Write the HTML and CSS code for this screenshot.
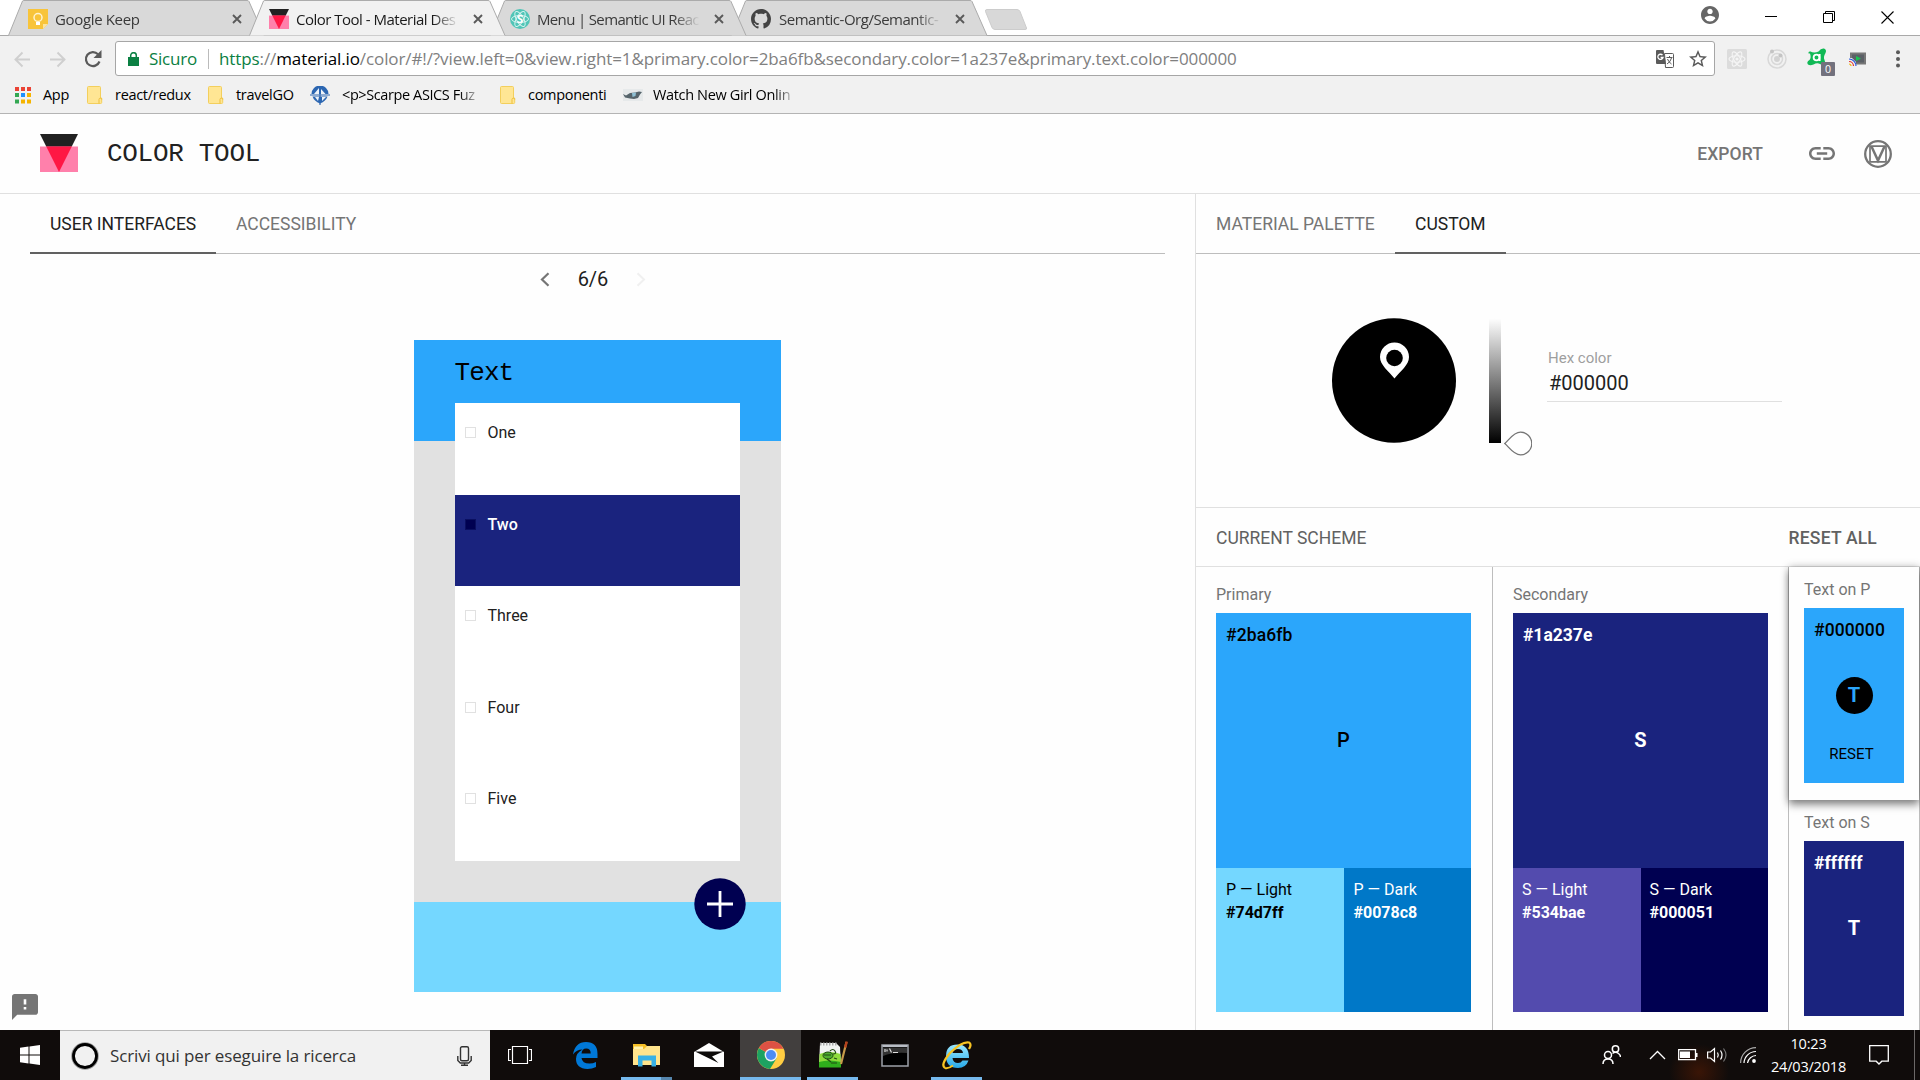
FILE: index.html
```html
<!DOCTYPE html>
<html lang="it">
<head>
<meta charset="utf-8">
<title>Color Tool - Material Design</title>
<link rel="stylesheet" href="styles.css">
</head>
<body>
<svg class="defs" width="0" height="0">
  <defs>
    <symbol id="folder" viewBox="0 0 16 18"><path d="M.5 1.5a1 1 0 0 1 1-1h11a1 1 0 0 1 1 1V12h1.2v4.5a1 1 0 0 1-1 1H1.500a1 1 0 0 1-1-1z" fill="#ffe694" stroke="#f3cf5c"/><path d="M12 17.500v-4a1.300 1.300 0 0 1 2.700 0" fill="none" stroke="#eebf3c"/></symbol>
    <symbol id="close" viewBox="0 0 10 10"><path d="M1 1l8 8M9 1l-8 8" stroke="#5a5a5a" stroke-width="1.900"/></symbol>
    <symbol id="logo" viewBox="0 0 38 38"><path d="M0 0h38L19 38z" fill="#212121"/><path d="M0 12.500h38V38H0z" fill="#ff80ab"/><path d="M6.250 12.500h25.500L19 38z" fill="#ff1744"/></symbol>
    <linearGradient id="ie" x1="0" y1="0" x2="0" y2="1"><stop offset="0" stop-color="#9be8ff"/><stop offset="1" stop-color="#27a9e8"/></linearGradient>
  </defs>
</svg>

<header class="browser">
  <div class="tabstrip">
    <div class="tab t1">
      <svg class="shape" viewBox="0 0 257 36"><path d="M.5 35.500L14.500 1Q15 .5 16 .5H239Q240.500.5 241 1.500L256 35.500"/></svg>
      <svg class="fav" viewBox="0 0 20 20"><path d="M0 0h20v15l-5 5H0z" fill="#f8c43a"/><path d="M20 15l-5 5v-5z" fill="#fbe3a0"/><circle cx="10" cy="8.500" r="4" fill="none" stroke="#fff3d0" stroke-width="1.500"/><path d="M8 13h4v3H8z" fill="#fff"/></svg>
      <span class="title">Google Keep</span>
      <svg class="x"><use href="#close"/></svg>
    </div>
    <div class="tab t2 active">
      <svg class="shape" viewBox="0 0 257 36"><path d="M.5 35.500L14.500 1Q15 .5 16 .5H239Q240.500.5 241 1.500L256 35.500"/></svg>
      <svg class="fav"><use href="#logo"/></svg>
      <span class="title">Color Tool - Material Des</span>
      <svg class="x"><use href="#close"/></svg>
    </div>
    <div class="tab t3">
      <svg class="shape" viewBox="0 0 257 36"><path d="M.5 35.500L14.500 1Q15 .5 16 .5H239Q240.500.5 241 1.500L256 35.500"/></svg>
      <svg class="fav" viewBox="0 0 20 20"><circle cx="10" cy="10" r="10" fill="#50c5b7"/><g fill="none" stroke="#d5f3ef"><ellipse cx="10" cy="10" rx="8.500" ry="3.500"/><ellipse cx="10" cy="10" rx="8.500" ry="3.500" transform="rotate(60 10 10)"/><ellipse cx="10" cy="10" rx="8.500" ry="3.500" transform="rotate(120 10 10)"/></g><text x="10" y="14" text-anchor="middle" font-size="11" font-weight="700" fill="#fff">S</text></svg>
      <span class="title">Menu | Semantic UI Reac</span>
      <svg class="x"><use href="#close"/></svg>
    </div>
    <div class="tab t4">
      <svg class="shape" viewBox="0 0 257 36"><path d="M.5 35.500L14.500 1Q15 .5 16 .5H239Q240.500.5 241 1.500L256 35.500"/></svg>
      <svg class="fav" viewBox="0 0 16 16"><path fill="#444" d="M8 0C3.580 0 0 3.580 0 8c0 3.540 2.290 6.530 5.470 7.590.4.070.55-.17.55-.38 0-.19-.01-.82-.01-1.490-2.010.37-2.530-.49-2.690-.94-.09-.23-.48-.94-.82-1.130-.28-.15-.68-.52-.01-.53.63-.01 1.080.58 1.230.82.72 1.210 1.870.87 2.330.66.070-.52.28-.87.51-1.070-1.780-.2-3.640-.89-3.640-3.950 0-.87.31-1.590.82-2.150-.08-.2-.36-1.020.08-2.120 0 0 .67-.21 2.200.82.64-.18 1.320-.27 2-.27s1.360.09 2 .27c1.530-1.040 2.200-.82 2.200-.82.44 1.100.16 1.920.08 2.120.51.56.82 1.270.82 2.150 0 3.070-1.870 3.750-3.650 3.950.29.25.54.73.54 1.480 0 1.070-.01 1.930-.01 2.200 0 .21.15.46.55.38A8.010 8.010 0 0 0 16 8c0-4.420-3.580-8-8-8z"/></svg>
      <span class="title">Semantic-Org/Semantic-</span>
      <svg class="x"><use href="#close"/></svg>
    </div>
    <svg class="newtab" width="44" height="22" viewBox="0 0 44 22"><path d="M3 .5H33q2 0 3 2l6.500 16.500q.5 1.500-1.500 1.500H11q-2 0-3-2L1.500 2.500Q1 .5 3 .5z" fill="#d8d8d8" stroke="#ccc"/></svg>
    <div class="winctl">
      <svg width="18" height="18" viewBox="2 2 20 20"><path fill="#666" d="M12 2C6.480 2 2 6.480 2 12s4.480 10 10 10 10-4.480 10-10S17.520 2 12 2zm0 3c1.660 0 3 1.340 3 3s-1.340 3-3 3-3-1.340-3-3 1.340-3 3-3zm0 14.200a7.200 7.200 0 0 1-6-3.220c.030-1.990 4-3.080 6-3.080s5.970 1.090 6 3.080a7.200 7.200 0 0 1-6 3.220z"/></svg>
      <svg width="12" height="12"><path d="M0 5.500h12" stroke="#000"/></svg>
      <svg width="12" height="12"><path d="M.5 2.500h9v9h-9zM2.500 2.500v-2h9v9h-2" fill="none" stroke="#000"/></svg>
      <svg width="13" height="13"><path d="M.5.5l12 12M12.500.5l-12 12" stroke="#000" stroke-width="1.100"/></svg>
    </div>
  </div>

  <div class="toolbar">
    <svg class="nav" width="17" height="17" viewBox="0 0 17 17"><path d="M16 8.500H2M8.500 1.500l-7 7 7 7" fill="none" stroke="#cfcfcf" stroke-width="1.900"/></svg>
    <svg class="nav" width="17" height="17" viewBox="0 0 17 17"><path d="M1 8.500h14M8.500 1.500l7 7-7 7" fill="none" stroke="#cfcfcf" stroke-width="1.900"/></svg>
    <svg class="nav" width="18" height="18" viewBox="0 0 18 18"><path d="M15.500 11.500A7 7 0 1 1 14 4.200" fill="none" stroke="#5a5a5a" stroke-width="2.200"/><path d="M17.500 0v8h-8z" fill="#5a5a5a"/></svg>
    <div class="omnibox">
      <svg class="lock" width="11" height="14" viewBox="0 0 11 14"><path d="M0 5h11v9H0z" fill="#0b8043"/><path d="M2.700 6V3.500a2.800 2.800 0 0 1 5.600 0V6" fill="none" stroke="#0b8043" stroke-width="1.500"/></svg>
      <span class="secure">Sicuro</span>
      <span class="sep"></span>
      <span class="url"><i class="g">https</i>://<i class="k">material.io</i>/color/#!/?view.left=0&amp;view.right=1&amp;primary.color=2ba6fb&amp;secondary.color=1a237e&amp;primary.text.color=000000</span>
      <svg class="translate" width="18" height="18" viewBox="0 0 18 18"><path d="M8.500 3.500h8a1 1 0 0 1 1 1v12a1 1 0 0 1-1 1H9.500z" fill="#fff" stroke="#5a5a5a"/><path d="M1 0h6.500L10 14H1a1 1 0 0 1-1-1V1a1 1 0 0 1 1-1z" fill="#5a5a5a"/><path d="M6.500 5.200A2.600 2.600 0 1 0 7 7.500H4.600" fill="none" stroke="#fff" stroke-width="1.300"/><path d="M10.500 7.500h6M13.500 6v1.500M15.500 8q-1 4-4.500 6M11.500 9q1 3 4 5" fill="none" stroke="#5a5a5a"/></svg>
      <svg width="18" height="18" viewBox="2 2 20 20"><path fill="#5a5a5a" d="M22 9.240l-7.190-.62L12 2 9.190 8.630 2 9.240l5.460 4.730L5.820 21 12 17.270 18.180 21l-1.630-7.030L22 9.240zM12 15.400l-3.760 2.270 1-4.280-3.320-2.880 4.380-.38L12 6.100l1.710 4.040 4.380.38-3.320 2.880 1 4.280L12 15.400z"/></svg>
    </div>
    <div class="exts">
      <svg width="20" height="20" viewBox="0 0 20 20"><rect width="20" height="20" rx="1.500" fill="#dcdcdc"/><g fill="none" stroke="#f5f5f5" stroke-width="1.100"><ellipse cx="10" cy="10" rx="8" ry="3.200"/><ellipse cx="10" cy="10" rx="8" ry="3.200" transform="rotate(60 10 10)"/><ellipse cx="10" cy="10" rx="8" ry="3.200" transform="rotate(120 10 10)"/></g><circle cx="10" cy="10" r="1.600" fill="#f5f5f5"/></svg>
      <svg width="20" height="20" viewBox="0 0 20 20"><g fill="none" stroke="#d8d8d8"><circle cx="10" cy="10" r="9" stroke-width="1.500"/><circle cx="10" cy="10" r="5.500" stroke-width="1.500"/></g><circle cx="10" cy="10" r="3" fill="#d2d2d2"/><circle cx="5" cy="2.500" r="2" fill="#c4c4c4"/><circle cx="13.500" cy="6.500" r="2" fill="#c4c4c4"/></svg>
      <svg width="29" height="28" viewBox="0 0 29 28"><path d="M2.500 5.500Q2 3 4.500 3.500q3.500 2 8 0Q15 0 18 .5q3 1 1.500 4.500-2.500 4-1 7 1.500 4-.5 5-2 .5-4-1-3-1.500-6.500.5-3.500 1.500-5.500 0-2-2.500 1.500-4.500 2-2.500.5-6.500z" fill="#10b955"/><circle cx="10.500" cy="9.500" r="2.900" fill="none" stroke="#fff" stroke-width="1.800"/><path d="M13.700 6v7" stroke="#fff" stroke-width="1.800"/><rect x="15" y="14" width="14" height="14" rx="1" fill="#72717d"/><text x="22" y="25" text-anchor="middle" font-size="10.500" fill="#fff">0</text></svg>
      <svg width="17" height="14" viewBox="0 0 17 14"><path d="M2 1.500h14v10H2z" fill="#5b6066" stroke="#777" stroke-width="2"/><path d="M7 4l5 2.500L7 9z" fill="#18c653"/><path d="M0 6h3l4 4v4H0z" fill="#f1f1f1"/><g fill="none" stroke-width="1.200"><path d="M0 12a2 2 0 0 1 2 2" stroke="#f4b400"/><path d="M0 9.500A4.500 4.500 0 0 1 4.500 14" stroke="#d33"/><path d="M0 7a7 7 0 0 1 7 7" stroke="#2455e0"/></g></svg>
      <svg width="4" height="18" fill="#5a5a5a"><circle cx="2" cy="2.200" r="2"/><circle cx="2" cy="9" r="2"/><circle cx="2" cy="15.500" r="2"/></svg>
    </div>
  </div>

  <nav class="bookmarks">
    <svg class="b0" width="16" height="17" viewBox="0 0 16 17"><g fill="#ea4335"><path d="M0 0h4v4H0zM6 0h4v4H6zM12 0h4v4h-4z"/></g><path fill="#34a853" d="M0 6h4v4H0zM0 12.500h4v4H0z"/><path fill="#1e90ff" d="M6 6h4v4H6z"/><path fill="#f5b400" d="M12 6h4v4h-4zM6 12.500h4v4H6zM12 12.500h4v4h-4z"/></svg>
    <span class="m1">App</span>
    <svg width="16" height="18"><use href="#folder"/></svg><span class="m2">react/redux</span>
    <svg width="16" height="18"><use href="#folder"/></svg><span class="m3">travelGO</span>
    <svg width="20" height="19" viewBox="0 0 20 19"><path d="M1.500 8a8.500 8.500 0 0 1 17 0z" fill="#2c66b1"/><path d="M4 8l5-6v6zM11 3l4.500 5H11z" fill="#eef3f9"/><path d="M2.500 10.500h15Q16 15 10 17.500 4 15 2.500 10.500z" fill="#2c66b1"/><path d="M5 11h4l-1 4zM12 11h4l-4 4z" fill="#eef3f9"/><path d="M0 9h20M10 0v19" stroke="#2c66b1" stroke-width="1.200"/></svg><span class="m4 fade">&lt;p&gt;Scarpe ASICS Fuz</span>
    <svg width="16" height="18"><use href="#folder"/></svg><span class="m5">componenti</span>
    <svg width="20" height="12" viewBox="0 0 20 12"><path d="M0 0h20v12H0z" fill="#e6e9ea"/><path d="M0 5l3 1.500L7 4l5-.5 4-1 3 .5-2 2.500-2 3.500-4 1-4-.5-5-1z" fill="#56646b"/><path d="M9 4l4-.5-.5 3.500-3 1z" fill="#8fc0d4"/></svg><span class="m6 fade">Watch New Girl Onlin</span>
  </nav>
</header>

<div class="appbar">
  <svg class="logo" width="38" height="38"><use href="#logo"/></svg>
  <h1>COLOR TOOL</h1>
  <span class="export">EXPORT</span>
  <svg class="link" width="26" height="13" viewBox="2 7 20 10"><path fill="#757575" d="M3.900 12c0-1.710 1.390-3.100 3.100-3.100h4V7H7c-2.760 0-5 2.240-5 5s2.240 5 5 5h4v-1.900H7c-1.710 0-3.100-1.390-3.100-3.100zM8 13h8v-2H8v2zm9-6h-4v1.900h4c1.710 0 3.100 1.390 3.100 3.100s-1.390 3.100-3.100 3.100h-4V17h4c2.760 0 5-2.240 5-5s-2.240-5-5-5z"/></svg>
  <svg width="28" height="28" viewBox="0 0 28 28"><g fill="none" stroke="#757575"><circle cx="14" cy="14" r="12.800" stroke-width="2.300"/><path d="M6 6.200h16v15.600H6z" stroke-width="1.700"/><path d="M7.500 6.500L14 20.500l6.500-14" stroke-width="2.500"/></g></svg>
</div>

<main>
  <section class="left">
    <div class="subtabs"><span class="sel ui">USER INTERFACES</span><span class="ac">ACCESSIBILITY</span></div>
    <div class="pager">
      <svg width="10" height="15" viewBox="0 0 10 15"><path d="M8.500 1.200L2 7.500l6.500 6.300" fill="none" stroke="#757575" stroke-width="2.200"/></svg>
      <span>6/6</span>
      <svg width="10" height="15" viewBox="0 0 10 15"><path d="M1.500 1.200L8 7.500l-6.500 6.300" fill="none" stroke="#f0f0f0" stroke-width="2"/></svg>
    </div>
    <div class="mock">
      <div class="mocktitle">Text</div>
      <div class="list">
        <div class="item"><i></i>One</div>
        <div class="item on"><i></i>Two</div>
        <div class="item"><i></i>Three</div>
        <div class="item"><i></i>Four</div>
        <div class="item"><i></i>Five</div>
      </div>
      <svg class="fab" width="52" height="52" viewBox="0 0 52 52"><circle cx="26" cy="26" r="25.700" fill="#000051"/><path d="M13 26h26M26 13v26" stroke="#fff" stroke-width="2.800"/></svg>
    </div>
    <svg class="feedback" width="26" height="26" viewBox="2 2 20 20"><path fill="#757575" d="M20 2H4c-1.100 0-1.990.9-1.990 2L2 22l4-4h14c1.100 0 2-.9 2-2V4c0-1.100-.9-2-2-2zm-7 12h-2v-2h2v2zm0-4h-2V6h2v4z"/></svg>
  </section>

  <section class="right">
    <div class="subtabs"><span class="mp">MATERIAL PALETTE</span><span class="sel cu">CUSTOM</span></div>
    <div class="picker">
      <svg width="124" height="125" viewBox="0 0 124 125"><ellipse cx="62" cy="62.500" rx="62" ry="62.300"/><path d="M62.500 24.500A14.500 14.500 0 0 0 48 39c0 8 8.500 14 14.500 21.500C68.500 53 77 47 77 39a14.500 14.500 0 0 0-14.500-14.500z" fill="#fff"/><circle cx="62.500" cy="40" r="8.300"/></svg>
      <div class="slider"></div>
      <svg class="drop" width="28" height="25" viewBox="0 0 28 25"><path d="M.8 12.500C5 9 9.500 1.200 16.500 1.200a11.200 11.200 0 0 1 0 22.600C9.500 23.800 5 16 .8 12.500z" fill="#fff" stroke="#757575" stroke-width="1.300"/></svg>
      <div class="hexfield"><label>Hex color</label><div>#000000</div></div>
    </div>
    <div class="schemebar"><span>CURRENT SCHEME</span><b>RESET ALL</b></div>
    <div class="scheme">
      <div class="col primary">
        <div class="label">Primary</div>
        <div class="big"><b>#2ba6fb</b><strong>P</strong></div>
        <div class="pair"><div class="lt">P — Light<b>#74d7ff</b></div><div class="dk">P — Dark<b>#0078c8</b></div></div>
      </div>
      <div class="col secondary">
        <div class="label">Secondary</div>
        <div class="big"><b>#1a237e</b><strong>S</strong></div>
        <div class="pair"><div class="lt">S — Light<b>#534bae</b></div><div class="dk">S — Dark<b>#000051</b></div></div>
      </div>
      <div class="texts">
        <div class="txt raised"><div class="label">Text on P</div><div class="sw"><b>#000000</b><strong class="dot">T</strong><span>RESET</span></div></div>
        <div class="txt"><div class="label">Text on S</div><div class="sw navy"><b>#ffffff</b><strong>T</strong></div></div>
      </div>
    </div>
  </section>
</main>

<footer class="taskbar">
  <div class="start"><svg width="20" height="20" viewBox="0 0 20 20"><path fill="#fff" d="M0 2.800L8.500 1.600V9.500H0zM9.500 1.400L20 0v9.500H9.500zM0 10.500h8.500v7.900L0 17.200zM9.500 10.500H20V20L9.500 18.600z"/></svg></div>
  <div class="search">
    <svg width="28" height="28" viewBox="0 0 28 28"><circle cx="14" cy="14" r="12" fill="none" stroke="#9a9a9a" stroke-width="3.600"/><circle cx="14" cy="14" r="11.500" fill="none" stroke="#000" stroke-width="2.800"/></svg>
    <span>Scrivi qui per eseguire la ricerca</span>
    <svg width="15" height="20" viewBox="0 0 15 20"><g fill="none" stroke="#333" stroke-width="1.400"><rect x="3.500" y=".7" width="8" height="14" rx="1.500"/><path d="M.8 10v4.500l2.500 2.500h8.400l2.500-2.500V10M7.500 17v2.300M4 19.300h7"/></g></svg>
  </div>
  <div class="apps">
    <div class="cell view"><svg width="24" height="18" viewBox="0 0 24 18"><path d="M4.500.5h15v17h-15zM3 3.500H.5v11H3M21 3.500h2.500v11H21" fill="none" stroke="#fff" stroke-width="1.200"/></svg></div>
    <div class="cell"><svg width="25" height="27" viewBox="0 0 25 27"><path d="M0 12.500Q2 0 13 0 24.500 0 24.500 12v4H8.500q.7 5.500 8 5.500 3.500 0 6.500-1.500v5q-4 2-8.500 2Q3 26.500 3 17q0-6 6.500-9.500Q3.500 7.500 0 12.500zm8.500-1h9.200q0-5-4.500-5-4.200 0-4.700 5z" fill="#0078d7"/></svg></div>
    <div class="cell"><svg width="28" height="25" viewBox="0 0 28 25"><path d="M0 1h12l2 2v4H0z" fill="#f5bf26"/><path d="M1 3.500h9v3H1z" fill="#fff3b0"/><path d="M0 6h11l3-3h13v19H0z" fill="#ffe48c"/><path d="M5 12.500h18v11h-4.500v-6h-9v6H5z" fill="#37b1e6"/></svg><u class="u1"></u></div>
    <div class="cell"><svg width="30" height="25" viewBox="0 0 30 25"><path d="M0 9L15 0l15 9v15H0z" fill="#fff"/><path d="M1 8.500h28.500L18 13.500l6.500 6.500z" fill="#0d0b0a"/></svg></div>
    <div class="cell cur"><svg width="28" height="28" viewBox="0 0 28 28"><circle cx="14" cy="14" r="14" fill="#ffcd42"/><path d="M14 14L1.880 7A14 14 0 0 0 13 27.970L19.500 17.500z" fill="#1da261"/><path d="M14 14L1.880 7A14 14 0 0 1 26.500 7.700H14z" fill="#dd5144"/><circle cx="14" cy="14" r="6.400" fill="#f1f1f1"/><circle cx="14" cy="14" r="5" fill="#4c8bf5"/></svg><u></u></div>
    <div class="cell"><svg width="30" height="28" viewBox="0 0 30 28"><path d="M2 2h16l4 4 1 20H1z" fill="#f2f4f2"/><path d="M1.500 13q10-4 21 0l.5 13H1z" fill="#8fdc3c"/><path d="M1 21q10-3 22 0v5.500H1z" fill="#2fae1c"/><path d="M2 3h17" stroke="#aaa" stroke-width="3" stroke-dasharray="1.500 1.500"/><ellipse cx="10" cy="14.500" rx="5" ry="3.500" fill="#4fae2e" stroke="#234a14"/><path d="M12 10q3-3 5 0t-2 3M6 14h7M9 18l4 3M13 22h6M16 17l3 1" fill="none" stroke="#234a14" stroke-width="1.200"/><path d="M28.500 1l-5.500 22" stroke="#c69a4a" stroke-width="2.200"/><path d="M28.700.500l-1.500 6" stroke="#b5401c" stroke-width="2.400"/></svg><u class="u2"></u></div>
    <div class="cell"><svg width="28" height="23" viewBox="0 0 28 23"><path d="M1 1h26v21H1z" fill="#000" stroke="#9ca0a8" stroke-width="1.500"/><path d="M1.500 2h25" stroke="#b9bdc5" stroke-width="2"/><path d="M2 12Q12 8 26 9V3.500H2z" fill="#333"/><path d="M4 5v3M6 5.500v2M8.500 4.500l2 4M12 8.500h5" stroke="#ddd" stroke-width="1.200"/></svg></div>
    <div class="cell"><svg width="30" height="29" viewBox="0 0 30 29"><path d="M4 15Q4 3.500 15.500 3.500T27 17H10.500q.5 5 5.500 5 3 0 4.500-2.500h6Q24 27 16 27 4 27 4 15zm6.500-3H21q-.5-4-5-4t-5.500 4z" fill="url(#ie)"/><path d="M3 27Q-2 24 8 12 20 0 27 1.500q3 1.500 0 6.500" fill="none" stroke="#f7c322" stroke-width="2.300"/><path d="M3 27q3 1 8-2.500" fill="none" stroke="#f7c322" stroke-width="2"/></svg><u class="u2"></u></div>
  </div>
  <div class="tray">
    <svg class="people" width="19" height="20" viewBox="0 0 19 20"><g fill="none" stroke="#fff" stroke-width="1.500"><circle cx="13.500" cy="4" r="3.200"/><circle cx="6" cy="10" r="3.500"/><path d="M1 19q0-5 5-5t5 5M10.500 8.500q3-2.500 6 0 2 1.500 2 3.500"/></g></svg>
    <svg class="chev" width="17" height="10" viewBox="0 0 17 10"><path d="M1 9l7.500-7.500L16 9" fill="none" stroke="#fff" stroke-width="1.300"/></svg>
    <svg class="bat" width="20" height="12" viewBox="0 0 20 12"><path d="M.7.700h16.800v10H.7z" fill="none" stroke="#fff" stroke-width="1.300"/><path d="M2 2.500h10v6.500H2zM18 4h1.500v4H18z" fill="#fff"/></svg>
    <svg class="vol" width="21" height="16" viewBox="0 0 21 16"><g fill="none" stroke="#fff" stroke-width="1.200"><path d="M.6 5h2.900L7.500 1.500v13L3.500 11H.6zM10.500 5.500q1.500 2.500 0 5M13.500 3.500q3 4.500 0 9"/><path d="M16.500 1.500q5 6.500 0 13" stroke="#777"/></g></svg>
    <svg class="wifi" width="16" height="16" viewBox="0 0 16 16"><g fill="none" stroke="#fff" stroke-width="1.200"><path d="M.6 16A15.400 15.400 0 0 1 16 .6" stroke="#aaa"/><path d="M4 16A12 12 0 0 1 16 4.500M7.500 16A9 9 0 0 1 16 8.500"/></g><circle cx="14" cy="14" r="1.900" fill="#fff"/></svg>
    <div class="clock">10:23<br><span>24/03/2018</span></div>
    <svg class="note" width="20" height="20" viewBox="0 0 20 20"><path d="M.7.700h18.600v15.500h-6.500l-2.800 2.800-2.800-2.800H.7z" fill="none" stroke="#fff" stroke-width="1.300"/></svg>
    <div class="desk"></div>
  </div>
</footer>
</body>
</html>
```
FILE: styles.css
```css
* { box-sizing: border-box; }
body { margin: 0; width: 1920px; height: 1080px; overflow: hidden; display: flex; flex-direction: column; background: #fefefe; font-family: Roboto, sans-serif; color: #212121; }
svg { display: block; flex: none; }
.defs { position: absolute; }
span, b, label, h1 { white-space: nowrap; }

/* browser chrome */
.browser { height: 114px; background: #f1f1f1; border-bottom: 1px solid #b4b4b4; font-family: "Open Sans", sans-serif; }
.tabstrip { height: 36px; display: flex; padding-left: 8px; background: #fff; border-bottom: 1px solid #a9a9a9; }
.tab { position: relative; width: 241px; height: 36px; display: flex; align-items: center; padding: 0 7px 0 20px; gap: 7px; font-size: 15px; color: #3a3a3a; flex: none; }
.shape { position: absolute; left: 0; top: 0; width: 257px; height: 36px; fill: #d9d9d9; stroke: #ababab; }
.t1 { z-index: 3; } .t2 { z-index: 9; } .t3 { z-index: 2; } .t4 { z-index: 1; }
.active .shape { fill: #f1f1f1; }
.active { color: #1a1a1a; }
.fav { position: relative; width: 20px; height: 20px; margin-top: 2px; }
.tab .title { position: relative; width: 168px; margin-top: 1px; letter-spacing: -.35px; -webkit-mask-image: linear-gradient(90deg, #000 84%, transparent 100%); mask-image: linear-gradient(90deg, #000 84%, transparent 100%); }
.t2 .title { letter-spacing: -.5px; }
.t3 .title { letter-spacing: -.65px; }
.t4 .title { letter-spacing: -.48px; margin-left: 1px; margin-right: -1px; }
.x { position: relative; width: 10px; height: 10px; margin: 2px 0 0 7px; }
.newtab { margin: 9px 0 0 12px; }
.winctl { margin-left: auto; display: flex; padding: 0 26px 0 0; height: 34px; align-items: center; }
.winctl svg:nth-child(1) { margin: -4px 46px 0 0; }
.winctl svg:nth-child(2) { margin-right: 46px; }
.winctl svg:nth-child(3) { margin-right: 46px; }
.toolbar { display: flex; align-items: center; height: 46px; padding: 0 0 0 14px; }
.nav { margin-right: 18px; }
.nav:nth-child(3) { margin-right: 13px; }
.omnibox { width: 1600px; height: 35px; border: 1px solid #a6a6a6; border-radius: 3px; background: #fff; display: flex; align-items: center; padding: 0 7px 0 12px; font-size: 17px; margin-top: -1px; }
.secure { width: 50px; margin-left: 10px; color: #0b8043; letter-spacing: -.25px; }
.sep { width: 1px; height: 20px; background: #bbb; margin: 0 10px 0 9px; }
.url { flex: 1; color: #808080; letter-spacing: -.1px; }
.url i { font-style: normal; } .url .g { color: #0b8043; } .url .k { color: #000; }
.translate { margin-right: 15px; }
.exts { display: flex; align-items: center; }
.exts svg:nth-child(1) { margin-left: 12px; }
.exts svg:nth-child(2) { margin-left: 20px; }
.exts svg:nth-child(3) { margin: 5px 0 0 19px; }
.exts svg:nth-child(4) { margin-left: 14px; }
.exts svg:nth-child(5) { margin-left: 30px; }
.bookmarks { display: flex; align-items: center; height: 26px; padding-left: 15px; font-size: 14.500px; color: #000; letter-spacing: -.3px; }
.bookmarks span { margin: -2px 0 0 12px; }
.bookmarks .m1 { width: 44px; }
.bookmarks .m2 { width: 93px; }
.bookmarks .m3 { width: 74px; }
.bookmarks .m4 { width: 140px; margin-right: 18px; letter-spacing: -.4px; }
.bookmarks .m5 { width: 95px; }
.bookmarks .m6 { width: 144px; margin-left: 10px; letter-spacing: -.35px; }
.fade { -webkit-mask-image: linear-gradient(90deg, #000 84%, transparent); mask-image: linear-gradient(90deg, #000 84%, transparent); }

/* application bar */
.appbar { height: 80px; flex: none; display: flex; align-items: center; padding: 0 28px 0 40px; border-bottom: 1px solid #e0e0e0; }
.logo { margin-top: -2px; }
h1 { margin: 0 0 0 29px; flex: 1; font: 400 26px "Liberation Mono", monospace; letter-spacing: -.3px; }
.export { font-size: 17.500px; font-weight: 500; color: #757575; letter-spacing: .1px; }
.link { margin: 0 29px 0 46px; }
main { display: flex; height: 836px; flex: none; }
.left { width: 1195px; display: flex; flex-direction: column; align-items: center; position: relative; }
.subtabs { height: 60px; display: flex; border-bottom: 1px solid #bdbdbd; font-size: 17.500px; color: #757575; }
.subtabs span { height: 60px; line-height: 60px; padding: 0 20px; }
.subtabs .sel { color: #212121; border-bottom: 2px solid #616161; }
.left .subtabs { width: 1135px; }
.ui { width: 186px; } .mp { width: 199px; } .cu { width: 111px; }
.pager { display: flex; align-items: center; height: 50px; font-size: 20px; gap: 28px; padding-right: 9px; }
.mock { width: 367px; height: 652px; margin: 36px 1px 0 0; padding: 0 41px; background: linear-gradient(#2ba6fb 101px, #e1e1e1 101px 562px, #74d7ff 562px); position: relative; }
.mocktitle { height: 63px; padding-top: 18px; font: 400 26px "Liberation Mono", monospace; letter-spacing: -.9px; color: #000; }
.list { background: #fff; height: 458px; display: grid; grid-template-rows: repeat(5, 1fr); }
.item { display: flex; padding: 20px 0 0 10px; font-size: 16px; line-height: 20px; }
.item i { width: 11px; height: 11px; border: 1px solid #e1e1e1; margin: 4px 12px 0 0; }
.on { background: #1a237e; color: #fff; font-weight: 500; line-height: 19px; }
.on i { background: #000051; border-color: #0a0f60; }
.fab { position: absolute; left: 280px; top: 538px; }
.feedback { position: absolute; left: 12px; top: 800px; }

.right { flex: 1; border-left: 1px solid #e0e0e0; display: flex; flex-direction: column; }
.picker { height: 253px; display: flex; padding: 64px 0 0 136px; }
.slider { width: 12px; height: 125px; margin-left: 33px; background: linear-gradient(#fff, #000); }
.drop { margin: 113px 15px 0 3px; }
.hexfield { width: 235px; height: 84px; border-bottom: 1px solid #e0e0e0; padding-top: 31px; }
.hexfield label { display: block; font-size: 15px; line-height: 18px; color: #9e9e9e; padding-left: 1px; }
.hexfield div { font-size: 20px; line-height: 24px; margin-top: 4px; padding-left: 2px; }
.schemebar { height: 60px; border: solid #e0e0e0; border-width: 1px 0; display: flex; justify-content: space-between; align-items: center; padding: 2px 43px 0 20px; font-size: 17.500px; color: #616161; }
.schemebar b { font-weight: 500; letter-spacing: .2px; }
.scheme { display: flex; height: 463px; }
.col { width: 296px; padding: 10px 20px 0; border-right: 1px solid #bdbdbd; flex: none; }
.label { font-size: 16px; line-height: 36px; color: #757575; }
.primary { width: 297px; --c: #2ba6fb; --l: #74d7ff; --d: #0078c8; color: #000; }
.secondary { --c: #1a237e; --l: #534bae; --d: #000051; color: #fff; }
.big { height: 255px; width: 255px; background: var(--c); padding: 11px 10px; display: grid; font-size: 17.500px; }
.big > *, .sw > * { grid-area: 1 / 1; }
.big b, .sw b { font-weight: 700; line-height: 22px; }
.primary .big b { font-weight: 500; letter-spacing: .1px; }
.big strong { align-self: center; justify-self: center; font-size: 20px; font-weight: 500; line-height: 22px; margin-top: -2px; }
.secondary .big strong { font-weight: 700; }
.pair { display: flex; width: 255px; height: 144px; font-size: 16px; line-height: 23px; }
.pair div { flex: 1; padding: 10px 9px; }
.pair b { display: block; }
.lt { background: var(--l); } .dk { background: var(--d); color: #fff; }
.primary .pair div { padding-left: 10px; }
.texts { width: 131px; border-right: 1px solid #bdbdbd; }
.txt { height: 233px; padding: 0 15px; }
.txt .label { height: 41px; line-height: 46px; }
.raised { box-shadow: 0 5px 8px rgba(0, 0, 0, .4), 0 0 8px rgba(0, 0, 0, .25); position: relative; }
.sw { width: 100px; height: 175px; background: #2ba6fb; color: #000; padding: 10px; display: grid; font-size: 17.500px; grid-template-rows: 155px; }
.sw b { font-weight: 500; letter-spacing: .1px; padding-top: 1px; }
.sw strong { place-self: center; font-size: 20px; font-weight: 700; margin-top: -2px; }
.sw .dot { width: 37px; height: 37px; margin-top: 0; border-radius: 50%; background: #000; color: #2ba6fb; text-align: center; line-height: 37px; }
.sw span { align-self: end; justify-self: center; font-size: 15px; line-height: 19px; margin: 0 5px 9px 0; }
.navy { background: #1a237e; color: #fff; }
.navy b { font-weight: 700; }

/* taskbar */
.taskbar { height: 50px; flex: none; background: #100c0b; display: flex; font-family: "Open Sans", sans-serif; }
.start { width: 60px; padding: 15px 20px; }
.search { width: 430px; background: #f1f1f1; border-top: 1px solid #b8b8b8; display: flex; align-items: center; padding: 0 18px 0 11px; color: #333; font-size: 17px; }
.search span { flex: 1; margin-left: 11px; letter-spacing: -.13px; }
.apps { display: flex; }
.cell { position: relative; width: 62px; display: flex; align-items: center; justify-content: center; }
.view { width: 60px; margin-right: 4px; }
.cur { background: linear-gradient(90deg, #423f3e 61px, transparent 61px); }
.cell u { position: absolute; left: 0; bottom: 0; width: 61px; height: 3px; background: #76b9ed; }
.cell .u1 { left: 5px; width: 51px; background: linear-gradient(90deg, #76b9ed 40px, #5686ad 40px); }
.cell .u2 { left: 5px; width: 51px; }
.tray { margin-left: auto; display: flex; align-items: center; height: 50px; background: radial-gradient(ellipse 30px 28px at 97px 42px, #3a1506, transparent); }
.people { margin-right: 28px; }
.chev { margin-right: 12px; }
.bat { margin-right: 9px; }
.vol { margin-right: 12px; }
.clock { width: 105px; text-align: center; color: #fff; font-size: 14.500px; line-height: 23px; letter-spacing: -.2px; }
.note { margin: 0 25px 0 8px; }
.desk { width: 6px; height: 50px; border-left: 1px solid #6b6867; }
```
